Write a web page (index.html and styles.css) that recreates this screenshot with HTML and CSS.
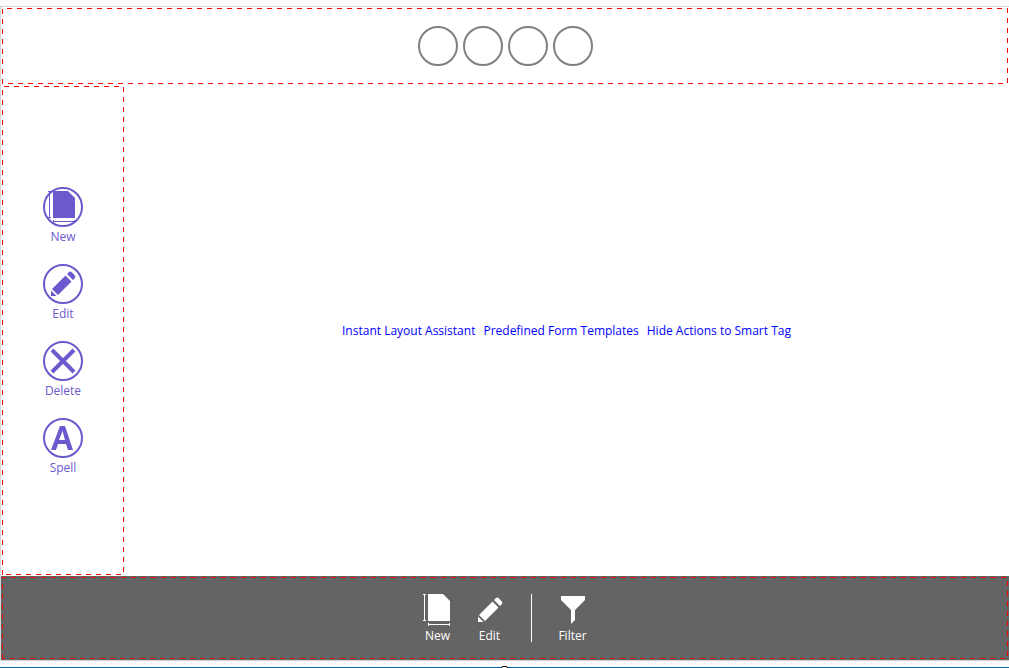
FILE: index.html
```html
<!DOCTYPE html>
<html lang="en">
<head>
<meta charset="utf-8">
<title>Form designer</title>
<link rel="stylesheet" href="styles.css">
</head>
<body>
<svg class="defs" aria-hidden="true">
  <symbol id="page" viewBox="0 0 32 32">
    <path fill="currentColor" d="M6 0h15l7 7v20H6z"/>
    <path fill="none" stroke="currentColor" d="M1 .5h3M2.500 .5v26M1 26.500h3M6.500 29v3M6.500 30.500h21M27.500 29v3"/>
  </symbol>
  <symbol id="pencil" viewBox="0 0 26 26">
    <path fill="currentColor" d="M1 25v-5.500L6.500 25zM2 18 15.500 4.500l6 6L8 24zM17 3l2-2q1.500-1 3 .5l2.500 2.500q1.500 1.500 .5 3l-2 2z"/>
  </symbol>
  <symbol id="cross" viewBox="0 0 26 26">
    <path fill="none" stroke="currentColor" stroke-width="4" d="m2 2 22 22M24 2 2 24"/>
  </symbol>
  <symbol id="spell" viewBox="0 0 26 26">
    <path fill="currentColor" fill-rule="evenodd" d="M1 25 10 1h5l8 24h-5l-2-6H8l-2 6zM9 15h6L12.500 6z"/>
  </symbol>
  <symbol id="funnel" viewBox="0 0 24 28">
    <path fill="currentColor" d="M0 0h24v4l-10 10v10l-4 4V14L0 4z"/>
  </symbol>
</svg>
<div class="form">
  <header class="windows guide">
    <button class="ring" aria-label="Window button 1"></button>
    <button class="ring" aria-label="Window button 2"></button>
    <button class="ring" aria-label="Window button 3"></button>
    <button class="ring" aria-label="Window button 4"></button>
  </header>
  <div class="middle">
    <nav class="side guide">
      <button class="action"><span class="ring"><svg class="icon-page"><use href="#page"/></svg></span>New</button>
      <button class="action"><span class="ring"><svg class="icon"><use href="#pencil"/></svg></span>Edit</button>
      <button class="action"><span class="ring"><svg class="icon"><use href="#cross"/></svg></span>Delete</button>
      <button class="action"><span class="ring"><svg class="icon"><use href="#spell"/></svg></span>Spell</button>
    </nav>
    <main class="links">
      <a href="#">Instant Layout Assistant</a>
      <a href="#">Predefined Form Templates</a>
      <a href="#">Hide Actions to Smart Tag</a>
    </main>
  </div>
  <footer class="toolbar">
    <div class="tools guide">
      <button class="tool"><span class="glyph"><svg class="icon-page"><use href="#page"/></svg></span>New</button>
      <button class="tool"><span class="glyph"><svg class="icon"><use href="#pencil"/></svg></span>Edit</button>
      <span class="divider"></span>
      <button class="tool"><span class="glyph"><svg class="icon-funnel"><use href="#funnel"/></svg></span>Filter</button>
    </div>
  </footer>
</div>
<div class="selection"><span class="handle"></span></div>
</body>
</html>
```
FILE: styles.css
```css
* { box-sizing: border-box; }

html { overflow: hidden; }

body {
  margin: 0;
  padding-top: 6px;
  min-height: 100vh;
  display: flex;
  flex-direction: column;
  background: #fbfbfb;
  font: 12px/16px "Open Sans", "Noto Sans", sans-serif;
}

.defs { display: none; }

button {
  margin: 0;
  padding: 0;
  border: 0;
  background: none;
  color: inherit;
  font: inherit;
}

.form {
  flex: 1;
  display: flex;
  flex-direction: column;
  border: 1px solid #d3d3d3;
  border-right: 0;
  background: #fff;
}

/* Dashed outline: 5px dashes, 5px gaps, each edge with its own phase */
.guide {
  --h: linear-gradient(90deg, #f00 50%, transparent 50%);
  --v: linear-gradient(#f00 50%, transparent 50%);
  background-image: var(--h), var(--h), var(--v), var(--v);
  background-size: 10px 1px, 10px 1px, 1px 10px, 1px 10px;
  background-repeat: repeat-x, repeat-x, repeat-y, repeat-y;
  background-position: left var(--t) top, left var(--b) bottom, left top var(--l), right top var(--r);
}

.windows {
  --t: 5px; --b: 6px; --l: 1px; --r: 0px;
  margin: 1px 1px 0;
  padding: 18px;
  display: flex;
  justify-content: center;
  gap: 5px;
  color: #808080;
}

.ring {
  width: 40px;
  height: 40px;
  border: 2px solid currentColor;
  border-radius: 50%;
  display: grid;
  place-items: center;
}

.middle {
  flex: 1;
  display: flex;
  margin: 2px 0 1px 1px;
}

.side {
  --t: 2px; --b: 4px; --l: 4px; --r: 1px;
  width: 122px;
  padding-top: 2px;
  display: flex;
  flex-direction: column;
  justify-content: center;
  align-items: center;
  gap: 19px;
  color: #6a5acd;
}

.action, .tool {
  display: flex;
  flex-direction: column;
  align-items: center;
  gap: 2px;
}

.icon { width: 26px; height: 26px; }
.icon-page { width: 32px; height: 32px; }
.icon-funnel { width: 24px; height: 28px; }

.links {
  flex: 1;
  display: flex;
  justify-content: center;
  align-items: center;
  gap: 8px;
}

.links a { color: #00f; text-decoration: none; }

.toolbar {
  padding: 1px;
  background: #646464;
  color: #fff;
}

.tools {
  --t: 9px; --b: 8px; --l: 7px; --r: 4px;
  display: flex;
  justify-content: center;
  align-items: center;
  gap: 16px;
  padding: 15px 0;
}

.tool { min-width: 36px; gap: 0; }

.glyph {
  height: 36px;
  display: grid;
  place-items: center;
}

.divider {
  width: 1px;
  height: 48px;
  margin: 0 7px;
  background: #fff;
}

.selection {
  margin-top: 6px;
  height: 1px;
  background: #0a64ad;
  display: flex;
  justify-content: center;
}

.handle {
  width: 7px;
  height: 7px;
  flex: none;
  position: relative;
  top: -1px;
  border: 1px solid #000;
  border-radius: 2px;
  background: #fff;
}
```
